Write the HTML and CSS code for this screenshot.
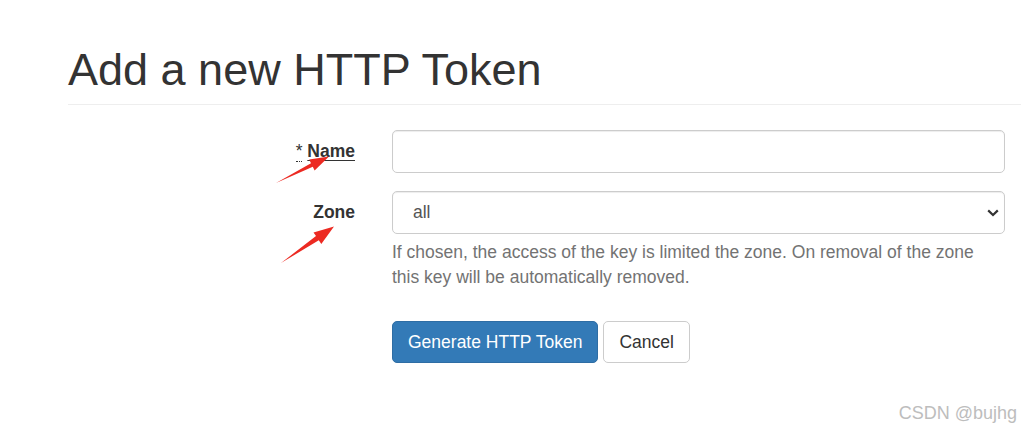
FILE: index.html
```html
<!DOCTYPE html>
<html lang="en">
<head>
<meta charset="utf-8">
<title>Add a new HTTP Token</title>
<link rel="stylesheet" href="styles.css">
</head>
<body>
<div class="page">
  <div class="page-header">
    <h1>Add a new HTTP Token</h1>
  </div>
  <form class="form">
    <div class="form-row">
      <label class="form-label" for="name"><abbr title="required">*</abbr> <span class="marked">Name</span></label>
      <div class="form-field">
        <input class="form-control" id="name" type="text">
      </div>
    </div>
    <div class="form-row">
      <label class="form-label" for="zone">Zone</label>
      <div class="form-field">
        <select class="form-control select" id="zone">
          <option>all</option>
        </select>
        <p class="help">If chosen, the access of the key is limited the zone. On removal of the zone this key will be automatically removed.</p>
      </div>
    </div>
    <div class="form-row">
      <div></div>
      <div class="form-field actions">
        <button type="button" class="btn btn-primary">Generate HTTP Token</button>
        <button type="button" class="btn btn-default">Cancel</button>
      </div>
    </div>
  </form>
  <svg class="arrows" width="1021" height="431" viewBox="0 0 1021 431" aria-hidden="true">
    <polygon points="276,183 312.8,166.8 314.6,170.4 329,156.5 309.2,159.6 311,163.2" fill="#ec2a22"/>
    <polygon points="281,263 318.8,240.3 321.3,244 334,226.5 313.5,232.4 316,236.1" fill="#ec2a22"/>
  </svg>
  <div class="watermark">CSDN @bujhg</div>
</div>
</body>
</html>
```
FILE: styles.css
```css
html, body {
  margin: 0;
  padding: 0;
  background: #fff;
}
body {
  font-family: "Liberation Sans", Arial, Helvetica, sans-serif;
  font-size: 17.5px;
  line-height: 25px;
  color: #333;
}
.page {
  position: relative;
  width: 1021px;
  height: 431px;
  overflow: hidden;
  padding-left: 68px;
  box-sizing: border-box;
}
.page-header {
  margin-top: 44.5px;
  padding-bottom: 10px;
  border-bottom: 1px solid #eee;
  margin-right: -10px;
}
.page-header h1 {
  margin: 0;
  font-size: 45px;
  line-height: 49.5px;
  font-weight: 400;
  color: #333;
}
.form {
  margin-top: 25px;
  padding-right: 16px;
}
.form-row {
  display: grid;
  grid-template-columns: 287px 1fr;
  column-gap: 37px;
  margin-bottom: 18.75px;
}
.form-label {
  text-align: right;
  font-weight: 700;
  padding-top: 8.75px;
  line-height: 25px;
}
.form-label abbr {
  text-decoration: none;
  border-bottom: 1.5px dotted #333;
  cursor: help;
  font-weight: 400;
}
.marked {
  text-decoration: underline;
  text-decoration-thickness: 1px;
  text-underline-offset: 3px;
}
.form-control {
  display: block;
  width: 100%;
  height: 42.5px;
  box-sizing: border-box;
  padding: 7.5px 15px;
  font-family: inherit;
  font-size: 17.5px;
  line-height: 25px;
  color: #555;
  background: #fff;
  border: 1px solid #ccc;
  border-radius: 5px;
  box-shadow: inset 0 1px 1px rgba(0,0,0,.075);
}
.select {
  -webkit-appearance: none;
  appearance: none;
  padding-left: 20px;
  background-image: url("data:image/svg+xml,%3Csvg xmlns='http://www.w3.org/2000/svg' width='12' height='8' viewBox='0 0 12 8'%3E%3Cpath d='M1.2 1.4 L6 6 L10.8 1.4' fill='none' stroke='%23333' stroke-width='2.2'/%3E%3C/svg%3E");
  background-repeat: no-repeat;
  background-position: right 5px center;
  background-size: 12px 8px;
}
.help {
  margin: 6.25px 0 12.5px;
  color: #737373;
  line-height: 25px;
}
.actions {
  display: flex;
  gap: 5px;
}
.btn {
  display: inline-block;
  height: 42px;
  padding: 7.5px 15px;
  font-family: inherit;
  font-size: 17.5px;
  line-height: 25px;
  border: 1px solid transparent;
  border-radius: 5px;
  cursor: pointer;
  box-sizing: border-box;
}
.btn-primary {
  color: #fff;
  background: #337ab7;
  border-color: #2e6da4;
}
.btn-default {
  color: #333;
  background: #fff;
  border-color: #ccc;
}
.arrows {
  position: absolute;
  left: 0;
  top: 0;
  pointer-events: none;
}
.watermark {
  position: absolute;
  right: 4px;
  top: 401px;
  font-size: 18px;
  line-height: 24px;
  color: #bdbdbd;
}
```
